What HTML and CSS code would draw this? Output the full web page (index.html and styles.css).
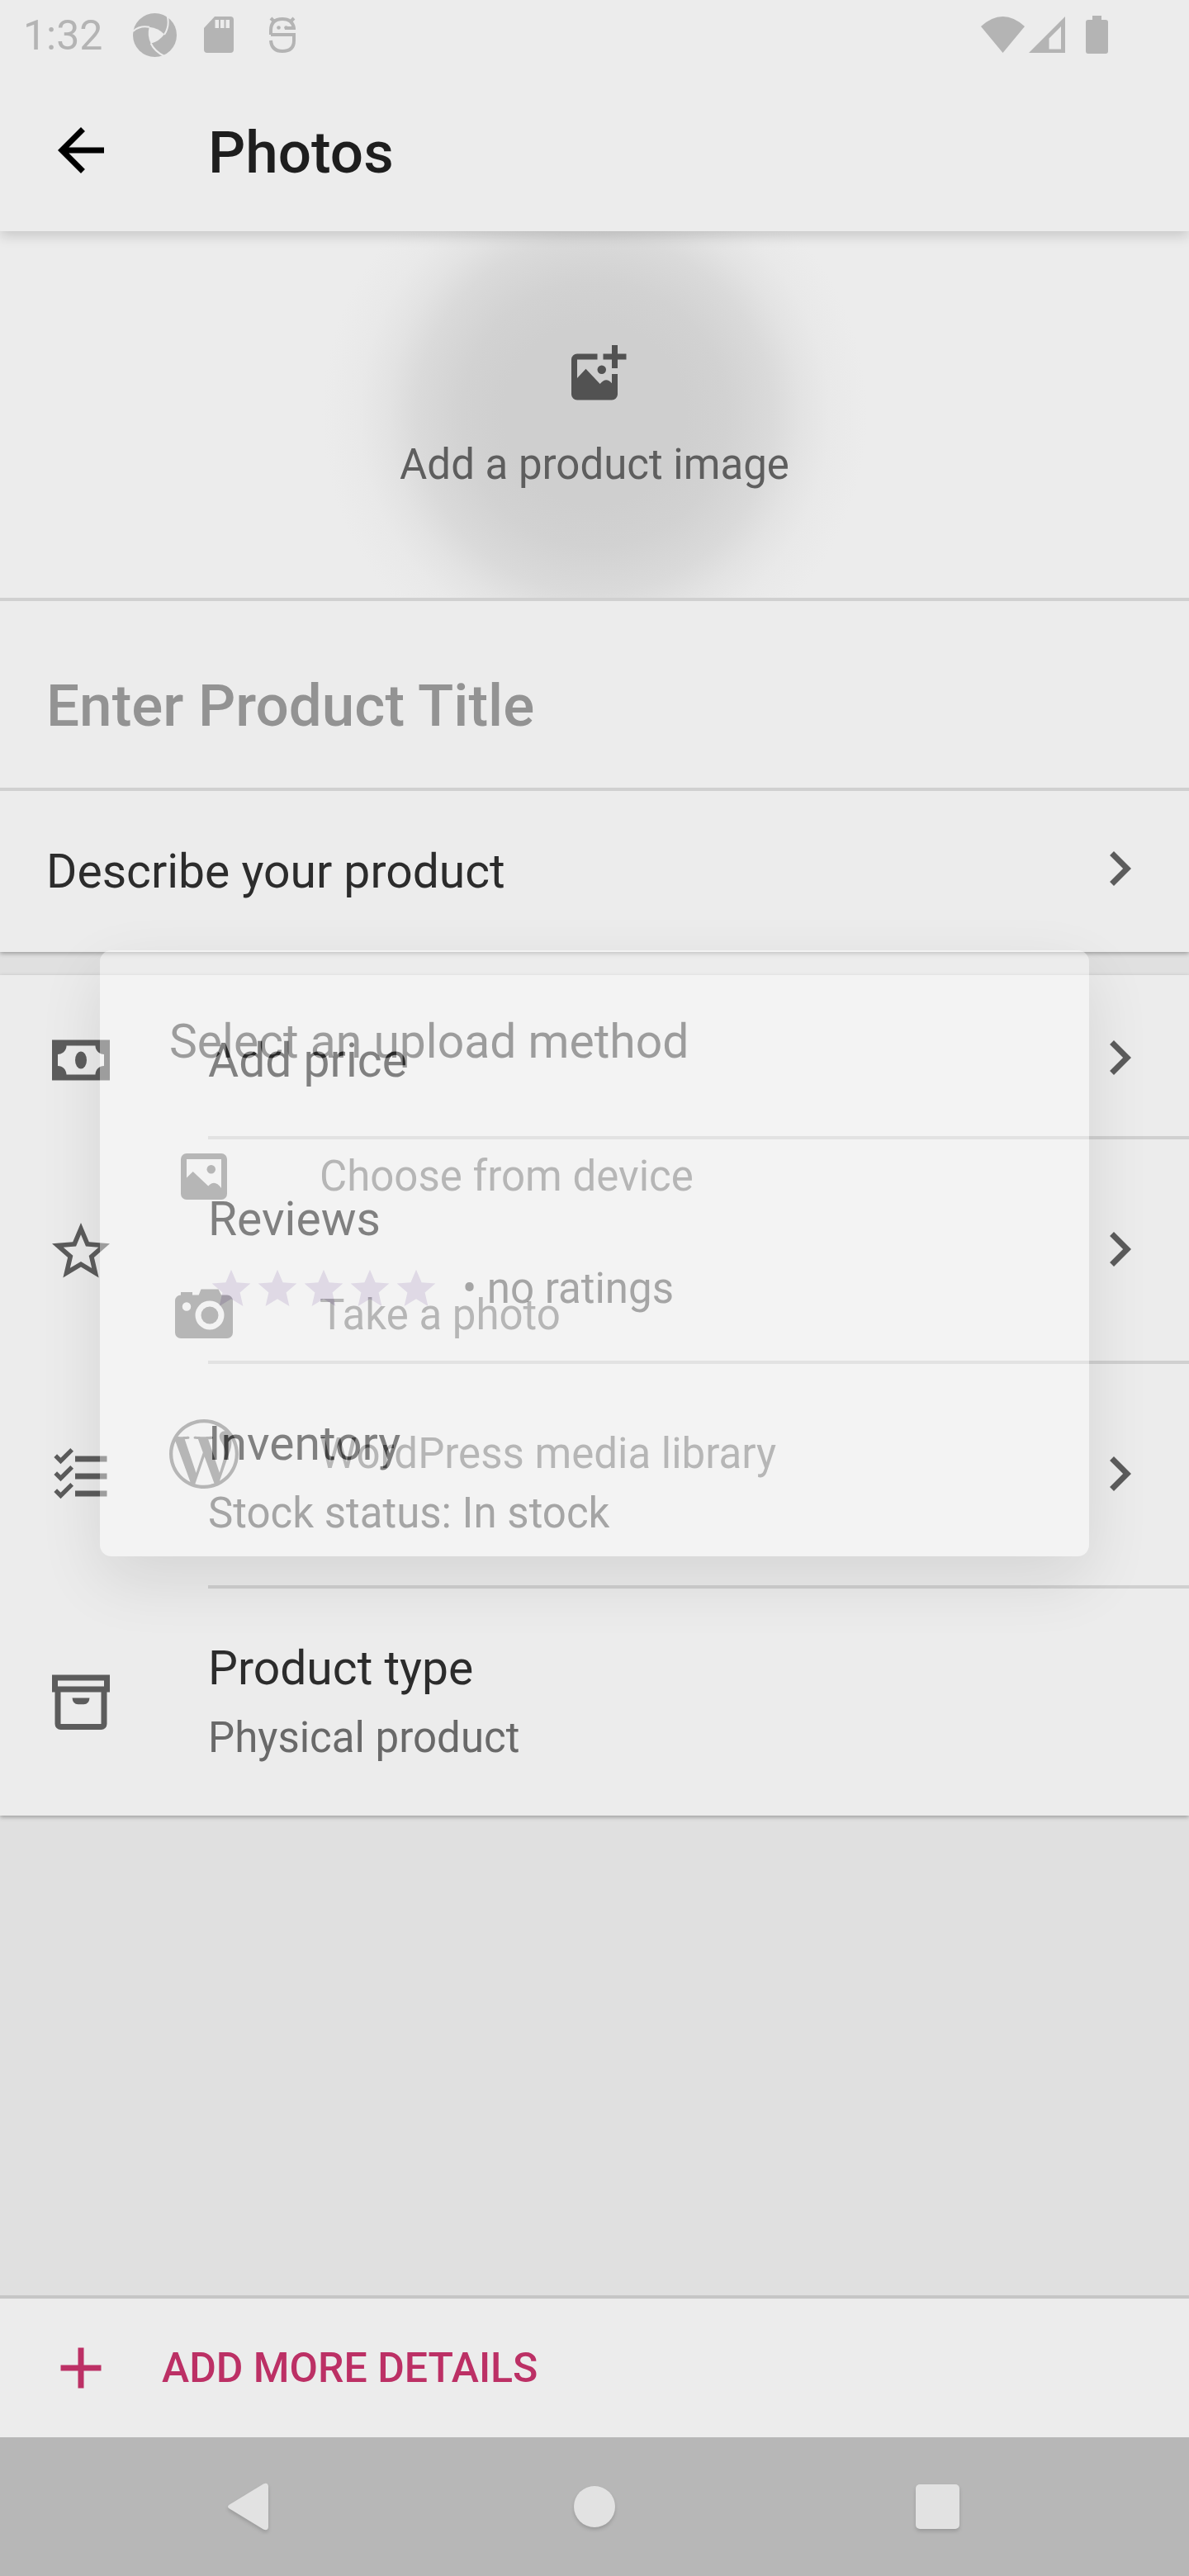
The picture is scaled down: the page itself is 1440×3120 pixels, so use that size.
FILE: index.html
```html
<!DOCTYPE html>
<html lang="en">
<head>
<meta charset="utf-8">
<meta name="viewport" content="width=device-width, initial-scale=1">
<title>Photos</title>
<link rel="stylesheet" href="styles.css">
</head>
<body>
<div class="screen">
  <div class="status-bar">
    <span class="status-bar__time">1:32</span>
    <svg class="status-bar__aperture" viewBox="0 0 53 53" aria-hidden="true">
      <circle cx="26.500" cy="26.500" r="26.500" fill="#b4b4b4"/>
      <path d="M19.700 16.700Q31 18 38 25.500Q32 34 21.700 36.700Q17 27 19.700 16.700z" fill="#ececec"/>
      <path d="M0 22Q8 14.500 20 16.700M41.500 3Q45 15 38 26M21.700 36.500Q26 46 38 52" fill="none" stroke="#ececec" stroke-width="2"/>
    </svg>
    <svg class="status-bar__card" viewBox="0 0 36 44" aria-hidden="true"><path fill="#b4b4b4" fill-rule="evenodd" d="M13 0H32Q36 0 36 4V40Q36 44 32 44H4Q0 44 0 40V14zM13.500 4v10h4.500V4zM20 4v10h4.500V4zM26.500 4v10h4.500V4z"/></svg>
    <svg class="status-bar__robot" viewBox="0 0 32 45" aria-hidden="true">
      <path d="M2 22V17Q2 3 16 3Q28 3 30 14H19M2 22H30V29Q30 42 16 42Q3 42 2 29M2 2L6 6M30 2L26 6" fill="none" stroke="#b4b4b4" stroke-width="4"/>
      <circle cx="11.500" cy="13.500" r="2.300" fill="#b4b4b4"/><circle cx="20.500" cy="13.500" r="2.300" fill="#b4b4b4"/>
    </svg>
    <svg class="status-bar__wifi" viewBox="0 0 53 44" aria-hidden="true"><path fill="#b4b4b4" d="M0 12Q26.500 -12 53 12L26.500 44z"/></svg>
    <svg class="status-bar__signal" viewBox="0 0 44 44" aria-hidden="true"><path fill="#b4b4b4" fill-rule="evenodd" d="M44 0V44H0zM39 12L24.500 26.500V39.500H39z"/></svg>
    <svg class="status-bar__battery" viewBox="0 0 27 46" aria-hidden="true"><path fill="#b4b4b4" d="M8 0h11v5h5q3 0 3 3v35q0 3-3 3H3q-3 0-3-3V8q0-3 3-3h5z"/></svg>
  </div>

  <header class="app-bar">
    <button class="icon-button" type="button" aria-label="Back">
      <svg class="icon" viewBox="0 0 24 24"><path fill="#000" d="M20 11H7.830l5.590-5.590L12 4l-8 8 8 8 1.410-1.410L7.830 13H20z"/></svg>
    </button>
    <h1 class="app-bar__title">Photos</h1>
  </header>

  <main class="content">
    <section class="card">
      <button class="add-image" type="button">
        <svg class="icon" viewBox="-1 0 24 24" aria-hidden="true">
          <path fill="#525252" fill-rule="evenodd" d="M5 5h7v2H5v6.400L8 10.200l4.900 5.200q2.100-2.600 4.100-.2V12h2v7a2 2 0 0 1-2 2H5a2 2 0 0 1-2-2V7a2 2 0 0 1 2-2z"/>
          <path fill="#525252" d="M17 2h2v3h3v2h-3v3h-2V7h-3V5h3z"/><circle cx="13.500" cy="10.500" r="1.500" fill="#525252"/>
        </svg>
        <span>Add a product image</span>
      </button>
      <input class="title-input" type="text" aria-label="Product title" placeholder="Enter Product Title">
      <a class="row row--plain" href="#description">
        <span class="row__title">Describe your product</span>
        <svg class="icon row__chevron" viewBox="0 0 24 24" aria-hidden="true"><path d="M10 6L8.590 7.410 13.170 12l-4.580 4.590L10 18l6-6z"/></svg>
      </a>
    </section>

    <section class="card card--details">
      <a class="row row--single" href="#price">
        <svg class="icon" viewBox="0 0 24 24" aria-hidden="true"><path fill-rule="evenodd" d="M2 5h20v14H2zM7 7c0 1.660-1.340 3-3 3v4c1.660 0 3 1.340 3 3h10c0-1.660 1.340-3 3-3v-4c-1.660 0-3-1.340-3-3z"/><ellipse cx="12" cy="12" rx="2" ry="3"/></svg>
        <span class="row__title">Add price</span>
        <svg class="icon row__chevron" viewBox="0 0 24 24" aria-hidden="true"><path d="M10 6L8.590 7.410 13.170 12l-4.580 4.590L10 18l6-6z"/></svg>
      </a>
      <hr class="divider">
      <a class="row" href="#reviews">
        <svg class="icon" viewBox="0 0 24 24" aria-hidden="true"><path d="M22 9.240l-7.190-.62L12 2 9.190 8.630 2 9.240l5.460 4.730L5.820 21 12 17.270 18.180 21l-1.630-7.030L22 9.240zM12 15.400l-3.760 2.270 1-4.280-3.320-2.880 4.380-.38L12 6.100l1.710 4.040 4.380.38-3.320 2.880 1 4.280L12 15.400z"/></svg>
        <span class="row__text">
          <span class="row__title">Reviews</span>
          <span class="row__detail">
            <span class="stars" aria-hidden="true">
              <svg class="star" viewBox="0 0 24 24"><path d="M12 17.270L18.180 21l-1.640-7.030L22 9.240l-7.190-.61L12 2 9.190 8.630 2 9.240l5.460 4.730L5.820 21z"/></svg>
              <svg class="star" viewBox="0 0 24 24"><path d="M12 17.270L18.180 21l-1.640-7.030L22 9.240l-7.190-.61L12 2 9.190 8.630 2 9.240l5.460 4.730L5.820 21z"/></svg>
              <svg class="star" viewBox="0 0 24 24"><path d="M12 17.270L18.180 21l-1.640-7.030L22 9.240l-7.190-.61L12 2 9.190 8.630 2 9.240l5.460 4.730L5.820 21z"/></svg>
              <svg class="star" viewBox="0 0 24 24"><path d="M12 17.270L18.180 21l-1.640-7.030L22 9.240l-7.190-.61L12 2 9.190 8.630 2 9.240l5.460 4.730L5.820 21z"/></svg>
              <svg class="star" viewBox="0 0 24 24"><path d="M12 17.270L18.180 21l-1.640-7.030L22 9.240l-7.190-.61L12 2 9.190 8.630 2 9.240l5.460 4.730L5.820 21z"/></svg>
            </span>
            <span>• no ratings</span>
          </span>
        </span>
        <svg class="icon row__chevron" viewBox="0 0 24 24" aria-hidden="true"><path d="M10 6L8.590 7.410 13.170 12l-4.580 4.590L10 18l6-6z"/></svg>
      </a>
      <hr class="divider">
      <a class="row" href="#inventory">
        <svg class="icon" viewBox="0 0 24 24" aria-hidden="true"><path d="M10 5h11v2H10zM10 11h11v2H10zM10 17h11v2H10z"/><path d="M3.200 4.900L5 6.700 8.900 2.800M3.200 10.900L5 12.700 8.900 8.800M3.200 16.900L5 18.700 8.900 14.800" fill="none" stroke="#5c5c5c" stroke-width="1.500"/></svg>
        <span class="row__text">
          <span class="row__title">Inventory</span>
          <span class="row__detail">Stock status: In stock</span>
        </span>
        <svg class="icon row__chevron" viewBox="0 0 24 24" aria-hidden="true"><path d="M10 6L8.590 7.410 13.170 12l-4.580 4.590L10 18l6-6z"/></svg>
      </a>
      <hr class="divider">
      <div class="row row--last">
        <svg class="icon" viewBox="0 -1 24 24" aria-hidden="true"><path fill-rule="evenodd" d="M2 2h20v6h-1v11a2 2 0 0 1-2 2H5a2 2 0 0 1-2-2V8H2zM4 4v2h16V4zM5 8v11h14V8z"/><path d="M9 10h6q-.2 2.200-2 2.200h-2q-1.800 0-2-2.200z"/></svg>
        <span class="row__text">
          <span class="row__title">Product type</span>
          <span class="row__detail">Physical product</span>
        </span>
      </div>
    </section>
  </main>

  <button class="add-details" type="button">
    <svg class="icon" viewBox="0 0 24 24" aria-hidden="true"><path fill="#bc3065" d="M19 13h-6v6h-2v-6H5v-2h6V5h2v6h6z"/></svg>
    <span>ADD MORE DETAILS</span>
  </button>

  <nav class="nav-bar" aria-label="System">
    <button class="nav-bar__button" type="button" aria-label="Back"><svg viewBox="0 0 56 58"><path d="M3 26.500L44 1.500Q49 -1 50 4V54Q49 59 44 56.500L3 31.500Q-1 29 3 26.500z"/></svg></button>
    <button class="nav-bar__button" type="button" aria-label="Home"><svg viewBox="0 0 56 58"><circle cx="28" cy="29" r="25"/></svg></button>
    <button class="nav-bar__button" type="button" aria-label="Overview"><svg viewBox="0 0 56 58"><rect x="0" y="2" width="53" height="54" rx="5"/></svg></button>
  </nav>

  <div class="overlay">
    <div class="dialog" role="dialog" aria-labelledby="upload-title">
      <h2 class="dialog__title" id="upload-title">Select an upload method</h2>
      <button class="option" type="button">
        <svg class="icon" viewBox="0 0 24 24" aria-hidden="true"><path fill-rule="evenodd" d="M6 4h12a2 2 0 0 1 2 2v12a2 2 0 0 1-2 2H6a2 2 0 0 1-2-2V6a2 2 0 0 1 2-2zM6 6v6.400l2.200-2.100 5.300 5q2.200-2.500 4.500.7V6z"/><circle cx="14.500" cy="9.500" r="1.500"/></svg>
        <span>Choose from device</span>
      </button>
      <button class="option" type="button">
        <svg class="icon" viewBox="0 0 24 24" aria-hidden="true"><path fill-rule="evenodd" d="M4 5V4h4v1h2.200L11 3h6l1 2h2a2 2 0 0 1 2 2v11a2 2 0 0 1-2 2H4a2 2 0 0 1-2-2V7a2 2 0 0 1 2-2zM14 7a5 5 0 1 0 0 10 5 5 0 0 0 0-10zM6 7.500a1.500 1.500 0 1 0 0 3 1.500 1.500 0 0 0 0-3z"/><circle cx="14" cy="12" r="3"/></svg>
        <span>Take a photo</span>
      </button>
      <button class="option" type="button">
        <svg class="icon" viewBox="0 0 24 24" aria-hidden="true"><path d="M21.469 6.825c.84 1.537 1.318 3.300 1.318 5.175 0 3.979-2.156 7.456-5.363 9.325l3.295-9.527c.615-1.540.82-2.771.82-3.864 0-.405-.026-.78-.07-1.110m-7.981.105c.647-.03 1.232-.105 1.232-.105.582-.075.514-.93-.067-.899 0 0-1.755.135-2.880.135-1.064 0-2.850-.15-2.850-.15-.585-.03-.661.855-.075.885 0 0 .54.061 1.125.09l1.680 4.605-2.370 7.080L5.354 6.900c.649-.03 1.234-.1 1.234-.1.585-.075.516-.93-.065-.896 0 0-1.746.138-2.874.138-.2 0-.438-.008-.69-.015C4.911 3.150 8.235 1.215 12 1.215c2.809 0 5.365 1.072 7.286 2.833-.046-.003-.091-.009-.141-.009-1.060 0-1.812.923-1.812 1.914 0 .89.513 1.643 1.060 2.531.411.72.89 1.643.89 2.977 0 .915-.354 1.994-.821 3.479l-1.075 3.585-3.900-11.610.001.014zM12 22.784c-1.059 0-2.081-.153-3.048-.437l3.237-9.406 3.315 9.087c.024.053.05.101.078.149-1.120.393-2.325.609-3.582.609M1.211 12c0-1.564.336-3.050.935-4.390L7.290 21.709C3.694 19.960 1.212 16.271 1.211 12M12 0C5.385 0 0 5.385 0 12s5.385 12 12 12 12-5.385 12-12S18.615 0 12 0"/></svg>
        <span>WordPress media library</span>
      </button>
    </div>
  </div>
</div>
</body>
</html>
```
FILE: styles.css
```css
* {
  box-sizing: border-box;
}

body {
  margin: 0;
  background: #e0e0e0;
  color: #2c2c2c;
  font-family: Roboto, "Liberation Sans", sans-serif;
  font-size: 51px;
  line-height: 56px;
}

button,
input {
  margin: 0;
  border: 0;
  background: none;
  color: inherit;
  font: inherit;
}

a {
  color: inherit;
  text-decoration: none;
}

svg {
  display: block;
  flex: none;
}

.screen {
  position: relative;
  display: flex;
  flex-direction: column;
  min-height: 100vh;
}

.icon {
  width: 84px;
  height: 84px;
  fill: #5c5c5c;
}

/* Status bar */
.status-bar {
  position: relative;
  z-index: 2;
  display: flex;
  align-items: center;
  height: 84px;
  padding: 0 98px 0 28px;
  background: #ececec;
  color: #b4b4b4;
  font-size: 50px;
}

.status-bar__time {
  padding-top: 2px;
}

.status-bar__aperture {
  width: 53px;
  height: 53px;
  margin-left: 37px;
}

.status-bar__card {
  width: 36px;
  height: 44px;
  margin-left: 33px;
}

.status-bar__robot {
  width: 32px;
  height: 45px;
  margin-left: 43px;
}

.status-bar__wifi {
  width: 53px;
  height: 44px;
  margin-left: auto;
}

.status-bar__signal {
  width: 44px;
  height: 44px;
  margin-left: 5px;
}

.status-bar__battery {
  width: 27px;
  height: 46px;
  margin-left: 25px;
}

/* App bar */
.app-bar {
  position: relative;
  z-index: 1;
  display: flex;
  align-items: center;
  gap: 112px;
  height: 196px;
  padding: 0 56px;
  background: #ececec;
  box-shadow: 0 6px 14px rgba(0, 0, 0, 0.15);
}

.icon-button {
  padding: 0;
}

.app-bar__title {
  margin: 0;
  padding-top: 6px;
  color: #1e1e1e;
  font-size: 71px;
  font-weight: 500;
  line-height: 84px;
}

/* Content */
.content {
  display: flex;
  flex: 1;
  flex-direction: column;
  gap: 28px;
}

.card {
  background: #ececec;
  box-shadow: 0 2px 5px rgba(0, 0, 0, 0.3);
}

.add-image {
  display: flex;
  flex-direction: column;
  align-items: center;
  gap: 40px;
  width: 100%;
  padding: 131px 0 133px;
  border-bottom: 4px solid #d0d0d0;
  background: radial-gradient(circle at center, #cfcfcf 110px, #d2d2d2 160px, #dadada 215px, #e3e3e3 250px, #e9e9e9 285px, #ececec 330px);
  color: #5e5e5e;
}

.title-input {
  display: block;
  width: 100%;
  padding: 85px 56px 57px;
  border-bottom: 4px solid #d0d0d0;
  font-size: 71px;
  font-weight: 500;
  line-height: 84px;
}

.title-input::placeholder {
  color: #939393;
  opacity: 1;
}

.row {
  display: flex;
  align-items: center;
  gap: 112px;
  padding: 65px 42px 59px 56px;
}

.row--plain {
  padding-top: 66px;
  padding-bottom: 65px;
}

.row--single {
  padding-top: 72px;
}

.row--last {
  padding-bottom: 66px;
}

.row > .icon {
  margin-top: -12px;
  margin-bottom: -10px;
}

.row > .row__chevron {
  margin-top: -18px;
  margin-left: auto;
}

.row__text {
  display: flex;
  flex-direction: column;
  gap: 24px;
}

.row__title {
  font-size: 57px;
  line-height: 64px;
}

.row__detail {
  display: flex;
  align-items: center;
  gap: 28px;
  color: #696969;
}

.stars {
  display: flex;
}

.star {
  width: 56px;
  height: 56px;
  fill: #cac1d5;
}

.divider {
  height: 4px;
  margin: 0 0 0 252px;
  border: 0;
  background: #d0d0d0;
}

/* Bottom action */
.add-details {
  display: flex;
  align-items: center;
  gap: 56px;
  width: 100%;
  padding: 42px 56px;
  border-top: 4px solid #c6c6c6;
  background: #ececec;
  color: #bc3065;
  font-size: 50px;
  font-weight: 500;
  text-align: left;
}

/* System navigation */
.nav-bar {
  display: grid;
  grid-template-columns: repeat(3, 1fr);
  height: 168px;
  padding: 0 94px;
  background: #b7b7b7;
}

.nav-bar__button {
  display: flex;
  align-items: center;
  justify-content: center;
}

.nav-bar__button svg {
  width: 56px;
  height: 58px;
  fill: #e2e2e2;
  filter: drop-shadow(0 3px 2px rgba(0, 0, 0, 0.15));
}

/* Upload dialog, part way through its fade */
.overlay {
  position: absolute;
  inset: 84px 0 168px;
  z-index: 2;
  display: flex;
  align-items: center;
  justify-content: center;
}

.dialog {
  display: flex;
  flex-direction: column;
  width: calc(100% - 242px);
  padding: 79px 84px 40px;
  border-radius: 14px;
  background: #fff;
  box-shadow: 0 28px 80px rgba(0, 0, 0, 0.26);
  opacity: 0.4;
}

.dialog__title {
  margin: 0 0 47px;
  color: #272727;
  font-size: 57px;
  font-weight: 400;
  line-height: 64px;
}

.option {
  display: flex;
  align-items: center;
  gap: 98px;
  height: 168px;
  padding: 0;
  color: #676767;
  text-align: left;
}

.option .icon {
  fill: #676767;
}
```
